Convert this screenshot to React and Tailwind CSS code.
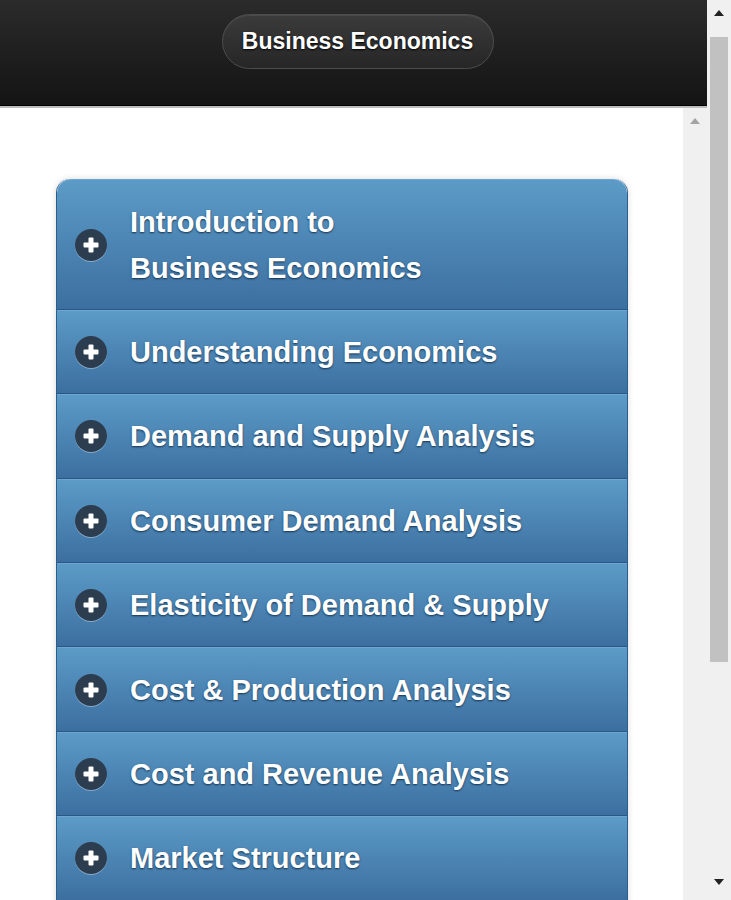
import React from "react";

const items = [
  ["Introduction to", "Business Economics"],
  ["Understanding Economics"],
  ["Demand and Supply Analysis"],
  ["Consumer Demand Analysis"],
  ["Elasticity of Demand & Supply"],
  ["Cost & Production Analysis"],
  ["Cost and Revenue Analysis"],
  ["Market Structure"],
];

function PlusIcon() {
  return (
    <div className="flex h-[32px] w-[32px] shrink-0 items-center justify-center rounded-full bg-[#2c3d50] shadow-[0_1px_0_rgba(255,255,255,0.35)]">
      <svg width="20" height="20" viewBox="0 0 20 20">
        <rect x="7.5" y="2.5" width="5" height="15" rx="1" fill="#fff" />
        <rect x="2.5" y="7.5" width="15" height="5" rx="1" fill="#fff" />
      </svg>
    </div>
  );
}

function Row({ lines, first }) {
  return (
    <div
      className={
        "flex items-center border-t border-t-[#6ea6cf] border-b border-b-[#2a5783] bg-gradient-to-b from-[#5c9bc7] to-[#3c6fa0] pl-[18px] pr-4 py-[18.2px] " +
        (first ? "rounded-t-[14px] pt-[18.7px]" : "")
      }
    >
      <PlusIcon />
      <div className="ml-[23px] whitespace-nowrap text-[29px] font-bold leading-[46px] text-white [text-shadow:0_1px_2px_#15324f]">
        {lines.map((l, i) => (
          <div key={i}>{l}</div>
        ))}
      </div>
    </div>
  );
}

function Arrow({ up, dark }) {
  return (
    <svg width="10" height="6" viewBox="0 0 10 6">
      {up ? (
        <polygon points="0,6 10,6 5,0" fill={dark ? "#222" : "#a3a3a3"} />
      ) : (
        <polygon points="0,0 10,0 5,6" fill={dark ? "#222" : "#a3a3a3"} />
      )}
    </svg>
  );
}

export default function App() {
  return (
    <div className="flex h-[900px] w-[731px] overflow-hidden bg-white font-['Liberation_Sans',Arial,sans-serif]">
      <div className="flex w-[707px] flex-col">
        <div className="flex h-[108px] shrink-0 flex-col">
          <div className="flex h-[105px] items-start justify-center bg-gradient-to-b from-[#2b2b2b] to-[#141414] pt-[14px]">
            <div className="ml-[8px] flex h-[55px] w-[272px] items-center justify-center rounded-full border border-[#4d4d4d] bg-gradient-to-b from-[#3b3b3b] to-[#262626] shadow-[inset_0_1px_0_rgba(255,255,255,0.08)]">
              <span className="text-[23px] font-bold text-white [text-shadow:0_1px_2px_#000]">
                Business Economics
              </span>
            </div>
          </div>
          <div className="h-[1px] bg-[#000]" />
          <div className="h-[2px] bg-[#bdbdbd]" />
        </div>
        <div className="flex min-h-0 flex-1">
          <div className="w-[683px] overflow-hidden pt-[71px]">
            <div className="ml-[56px] w-[572px] overflow-hidden rounded-t-[14px] border-x border-[#2b5e8e] shadow-[0_0_6px_rgba(0,0,0,0.15)]">
              {items.map((l, i) => (
                <Row key={i} lines={l} first={i === 0} />
              ))}
              <div className="h-[40px] border-t border-t-[#6ea6cf] bg-gradient-to-b from-[#5c9bc7] to-[#3c6fa0]" />
            </div>
          </div>
          <div className="flex w-[24px] flex-col items-center bg-[#f0f0f0] pt-[10px]">
            <Arrow up />
          </div>
        </div>
      </div>
      <div className="flex w-[24px] flex-col items-center bg-[#f0f0f0]">
        <div className="flex h-[25px] items-center justify-center">
          <Arrow up dark />
        </div>
        <div className="mx-[3px] mt-[12px] h-[625px] w-[18px] bg-[#c1c1c1]" />
        <div className="flex-1" />
        <div className="flex h-[30px] items-center justify-center pb-[6px]">
          <Arrow dark />
        </div>
      </div>
    </div>
  );
}
